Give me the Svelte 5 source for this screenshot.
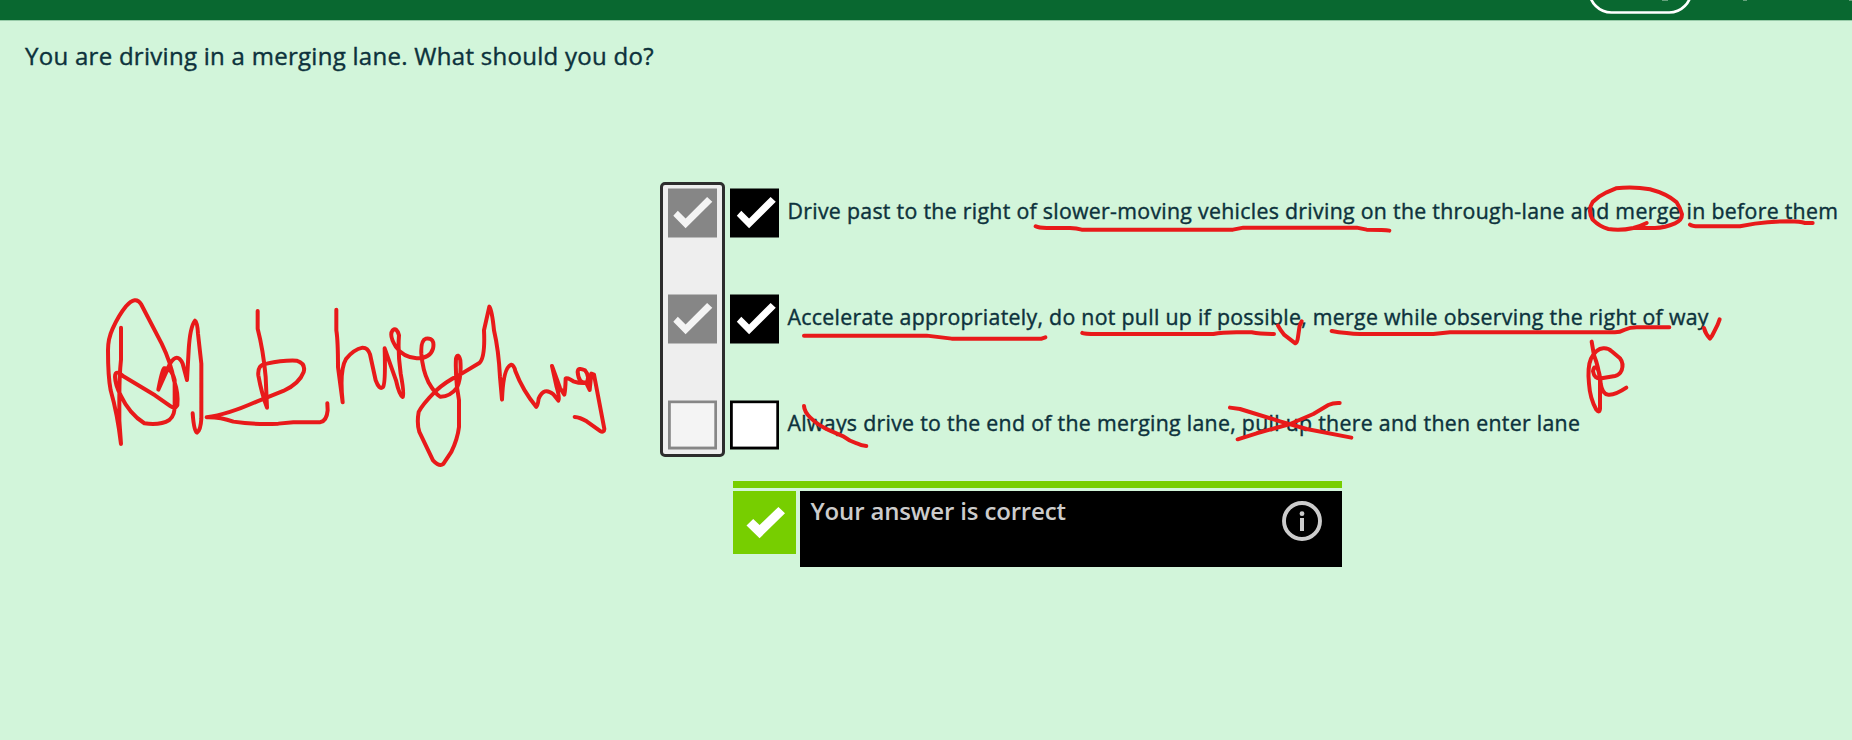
<script>
  const options = [
    { text: 'Drive past to the right of slower-moving vehicles driving on the through-lane and merge in before them', checked: true },
    { text: 'Accelerate appropriately, do not pull up if possible, merge while observing the right of way', checked: true },
    { text: 'Always drive to the end of the merging lane, pull up there and then enter lane', checked: false }
  ];

  // Pen strokes, grouped by the region of the canvas they were drawn in.
  const ink = [
    {
      x: 90, y: 280,
      strokes: [
        'M93 142V238Q88 285 88 350V420L93 491Q82 400 62 330Q54 290 54 210Q54 175 68 145Q86 105 108 78Q137 45 153 71L215 190Q242 245 252 300Q266 340 262 375Q255 388 240 377L195 345L100 288Q75 265 75 290Q76 315 92 345Q118 400 163 429Q210 436 238 419Q256 405 254 370V300Q245 262 222 264Q216 270 205 328L240 250Q262 215 278 250L291 299L296 210Q300 140 315 121Q322 125 324 160L334 250V415Q332 450 321 457Q312 455 308 399',
        'M503 92V145Q520 210 527 290L531 382Q515 340 505 285Q502 252 530 250Q580 239 620 241Q648 250 641 275Q628 310 580 332L500 364Q410 404 350 411Q390 410 430 424Q500 434 565 430L610 426H690Q710 424 713 390L712 369',
        'M739 88V150Q744 180 744 260L758 366Q748 270 768 236Q790 208 818 202Q834 202 840 222L857 300Q868 330 879 320Q887 310 884 204L918 300Q928 345 938 350Q944 345 932 280Q923 215 927 165Q920 140 908 150Q896 165 918 200Q940 232 980 234Q1020 235 1029 205Q1036 172 1008 175Q992 180 994 220Q998 270 1015 305Q1035 340 1050 349Q1080 350 1101 322Q1115 290 1111 240Q1104 215 1098 235Q1096 270 1101 320L1107 360V440Q1103 475 1084 515L1060 551Q1048 560 1029 540L988 455Q980 430 986 395Q995 375 1036 333Q1065 305 1110 283L1168 248Q1186 232 1182 150L1198 79Q1206 90 1212 150Q1226 210 1230 290L1236 358Q1240 260 1264 253Q1272 255 1276 272Q1298 330 1339 380Q1343 380 1346 355Q1362 318 1390 342L1405 361Q1410 355 1400 320L1386 257L1410 323L1423 343Q1426 330 1427 295Q1430 290 1450 303Q1470 310 1488 308Q1502 290 1485 270Q1464 260 1463 275Q1466 310 1488 306L1499 329L1504 280L1512 283L1543 446Q1542 458 1530 452L1490 423Q1470 411 1454 410'
      ]
    },
    {
      x: 640, y: 170,
      strokes: [
        'M492 496H860L935 505H1205L1216 501',
        'M492 707Q493 725 511 742Q535 766 570 781L610 798Q628 812 650 819Q665 827 679 827',
        'M1187 168Q1195 173 1220 173H1290Q1310 174 1325 178H1779L1810 172H2150L2180 178Q2235 178 2248 181',
        'M1327 488Q1332 491 1370 491H1720Q1745 486 1790 486H1835Q1860 491 1902 491',
        'M1914 466Q1920 478 1933 494L1966 519Q1972 517 1974 500L1979 466L1985 453',
        'M2075 482Q2095 487 2120 488Q2145 492 2170 491H2380L2430 486H2925Q2940 486 2952 479Q2970 471 2990 471H3088',
        'M1770 712L1800 716L1920 753L2000 776L2134 802',
        'M1793 807L1850 789L1950 761L2020 731L2065 704Q2080 697 2099 698'
      ]
    },
    {
      x: 1400, y: 170,
      strokes: [
        'M740 158Q720 168 700 173Q660 182 625 176Q600 170 578 148Q562 120 578 95Q595 78 620 66L648 54Q700 48 750 57Q800 70 830 96Q840 110 846 132Q846 150 825 159Q795 172 765 173H705',
        'M870 163Q877 168 895 168H1020L1065 160Q1120 153 1170 153Q1200 154 1215 158H1238',
        'M912 473Q916 490 930 505Q935 500 941 487L953 463L959 447',
        'M575 514L582 555Q596 590 600 630V715Q598 730 589 718Q570 685 567 640Q562 590 573 565Q588 535 610 534Q625 533 635 543L660 564Q672 580 665 600Q659 614 645 617L605 624Q583 628 579 603Q582 583 593 596Q600 610 602 640Q607 672 625 673Q645 675 679 652'
      ]
    }
  ];
</script>

{#snippet box(checked, edge, face, shift)}
  <svg class="box" width="49" height="50" viewBox="0 0 49 50" aria-hidden="true">
    <rect y=".5" width="49" height="49" fill={edge} />
    {#if checked}
      <path d="M6.8 27.7L11.3 22.8L19.1 30.5L40.6 8.9L45.8 13.7L19.1 40.2Z" transform="translate({shift} 0)" fill={face} />
    {:else}
      <rect x="2.8" y="3.2" width="43.5" height="43.4" fill={face} />
    {/if}
  </svg>
{/snippet}

<div class="page">
  <header>
    <svg class="topnav" width="280" height="20" viewBox="1572 0 280 20" aria-hidden="true">
      <rect x="1589.4" y="-31.5" width="101.8" height="44" rx="22" fill="none" stroke="#fff" stroke-width="2.7" />
      <path d="M1662 0h6v.8h-6zM1743 0h4v.8h-4zM1849 0h3v.8h-3z" fill="#83b494" />
    </svg>
  </header>

  <main>
    <h1>You are driving in a merging lane. What should you do?</h1>

    <section class="quiz">
      <div class="answers">
        <div class="solution">
          {#each options as o}
            {@render box(o.checked, '#868686', '#f4f4f4', -1.5)}
          {/each}
        </div>
        <ul>
          {#each options as o}
            <li>
              {@render box(o.checked, '#000', '#fff', 0)}
              <span class="label">{o.text}</span>
            </li>
          {/each}
        </ul>
      </div>

      <div class="feedback">
        <div class="bar"></div>
        <div class="result">
          <div class="badge">
            <svg width="63" height="63" viewBox="0 0 63 63" aria-hidden="true">
              <path d="M13.5 34.5L20.2 28L26.6 34.1L45.4 15.9L52 22.3L26.6 47.2Z" fill="#fff" />
            </svg>
          </div>
          <div class="message">
            <span>Your answer is correct</span>
            <svg width="42" height="42" viewBox="-21 -21 42 42" aria-hidden="true">
              <circle r="18" fill="none" stroke="#ccc" stroke-width="3.9" />
              <circle cy="-7.3" r="2.4" fill="#ccc" />
              <path d="M-2-3h4v13h-4z" fill="#ccc" />
            </svg>
          </div>
        </div>
      </div>
    </section>
  </main>

  <svg class="ink" width="1852" height="740" viewBox="0 0 1852 740" aria-hidden="true">
    {#each ink as g}
      <g transform="translate({g.x} {g.y + 0.3}) scale(.33333)">
        {#each g.strokes as d}<path {d} />{/each}
      </g>
    {/each}
  </svg>
</div>

<style>
  :global(body) { margin: 0; background: #d2f5da; overflow: hidden; }
  .page {
    position: relative;
    width: 1852px;
    height: 740px;
    overflow: hidden;
    background: #d2f5da;
    color: #0d323c;
    font-family: 'Open Sans', 'Noto Sans', sans-serif;
  }
  header {
    display: flex;
    justify-content: flex-end;
    box-sizing: border-box;
    height: 21px;
    background: #096830;
    border-bottom: 1px solid #98cba9;
  }
  .topnav { display: block; }
  h1 {
    margin: 0;
    padding: 18px 0 0 25px;
    font-size: 24px;
    line-height: 33px;
    font-weight: 500;
    letter-spacing: .28px;
    -webkit-text-stroke: .4px currentColor;
    white-space: nowrap;
  }
  .quiz { padding: 110px 0 0 660px; }
  .answers { display: flex; gap: 5px; height: 275px; }
  .solution {
    display: flex;
    flex-direction: column;
    gap: 56px;
    box-sizing: border-box;
    flex: none;
    width: 65px;
    padding: 3px 5px;
    border: 3px solid #2d2d2d;
    border-radius: 5px;
    background: #eee;
  }
  ul {
    display: flex;
    flex-direction: column;
    gap: 56px;
    margin: 0;
    padding: 6px 0 0;
    list-style: none;
  }
  li { display: flex; align-items: center; gap: 8.5px; height: 50px; }
  .box { display: block; flex: none; }
  .label {
    font-size: 21.3px;
    line-height: 30px;
    font-weight: 500;
    letter-spacing: .3px;
    -webkit-text-stroke: .4px currentColor;
    white-space: nowrap;
    padding-bottom: 5px;
  }
  .feedback { width: 608.7px; padding: 24px 0 0 73px; }
  .bar { height: 7px; background: #77ce00; }
  .result { display: flex; gap: 4px; padding-top: 3px; }
  .badge { width: 63px; height: 63px; background: #77ce00; }
  .badge svg { display: block; }
  .message {
    display: flex;
    justify-content: space-between;
    box-sizing: border-box;
    flex: 1;
    height: 76px;
    padding: 3px 18.9px 0 10.5px;
    background: #000;
    color: #ccc;
    font-size: 24px;
    line-height: 33px;
    font-weight: 600;
    letter-spacing: -.15px;
  }
  .message svg { margin-top: 6.4px; }
  .ink { position: absolute; left: 0; top: 0; pointer-events: none; }
  .ink path {
    fill: none;
    stroke: #e81a1a;
    stroke-width: 12;
    stroke-linecap: round;
    stroke-linejoin: round;
  }
</style>
